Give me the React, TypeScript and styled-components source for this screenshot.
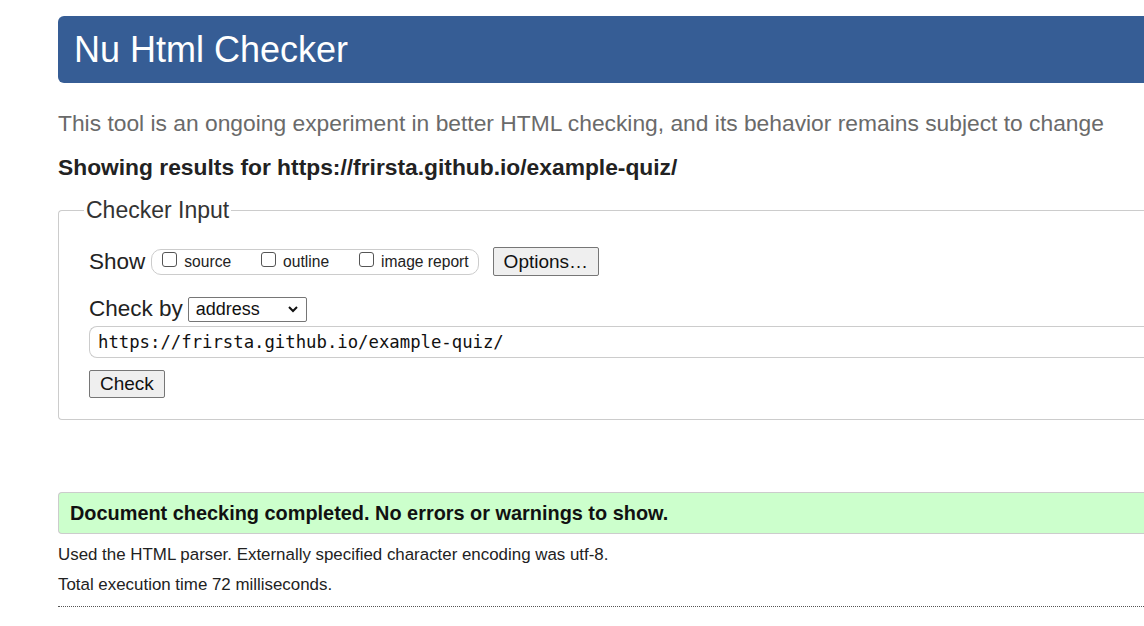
import React from "react";
import styled, { createGlobalStyle } from "styled-components";

const Global = createGlobalStyle`
  html, body { margin: 0; padding: 0; background: #fff; overflow: hidden; }
  body { font-family: "Liberation Sans", Arial, sans-serif; color: #222; }
`;

const Page = styled.div`
  width: 1200px;
  padding: 16px 0 0 58px;
`;

const Header = styled.h1`
  margin: 0;
  height: 67px;
  display: flex;
  align-items: center;
  padding: 0 16px;
  background: #365d95;
  color: #fff;
  font-weight: normal;
  font-size: 36px;
  border-radius: 6px 0 0 6px;
`;

const Tagline = styled.p`
  margin: 27px 0 0;
  font-size: 22.8px;
  color: #6a6a6a;
  line-height: 26px;
`;

const ResultsFor = styled.p`
  margin: 19px 0 0;
  font-size: 22.8px;
  font-weight: bold;
  color: #222;
  line-height: 24px;
`;

const Fieldset = styled.fieldset`
  margin: 18px 0 0;
  padding: 10px 0 21px 30px;
  border: 1px solid #ccc;
  border-radius: 4px 0 0 4px;
  border-right: none;
`;

const Legend = styled.legend`
  font-size: 23px;
  color: #333;
  padding: 0 2px;
  margin-left: -5px;
  line-height: 26px;
`;

const Row = styled.div<{ $top?: number; $gap?: number }>`
  display: flex;
  align-items: center;
  gap: ${(p) => p.$gap ?? 6}px;
  margin-top: ${(p) => p.$top ?? 0}px;
`;

const Label = styled.span`
  font-size: 22.5px;
  line-height: 26px;
  color: #222;
`;

const Group = styled.div`
  display: flex;
  align-items: center;
  height: 26px;
  box-sizing: border-box;
  border: 1px solid #ccc;
  border-radius: 10px;
  padding: 0 9px 0 10px;
  gap: 30px;
`;

const Opt = styled.label`
  display: flex;
  align-items: center;
  font-size: 15.6px;
  color: #222;
  gap: 7px;
`;

const Box = styled.span`
  width: 15px;
  height: 15px;
  border: 1px solid #555;
  border-radius: 3px;
  box-sizing: border-box;
  display: inline-block;
  margin-top: -4px;
`;

const Button = styled.button<{ $h?: number }>`
  font-family: "Liberation Sans", Arial, sans-serif;
  font-size: 19px;
  color: #111;
  background: #efefef;
  border: 1px solid #767676;
  border-radius: 2px;
  padding: 0 10px;
  height: ${(p) => p.$h ?? 29}px;
`;

const OptionsButton = styled(Button)`
  margin-left: 8px;
`;

const Select = styled.div`
  width: 119px;
  height: 25px;
  box-sizing: border-box;
  border: 1px solid #767676;
  border-radius: 2px;
  display: flex;
  align-items: center;
  justify-content: space-between;
  padding: 0 7px 0 7px;
  font-size: 18px;
  color: #111;
`;

const UrlInput = styled.div`
  margin-top: 4px;
  height: 32px;
  box-sizing: border-box;
  border: 1px solid #ccc;
  border-right: none;
  border-radius: 8px 0 0 8px;
  display: flex;
  align-items: center;
  padding-left: 8px;
  font-family: "DejaVu Sans Mono", "Liberation Mono", monospace;
  font-size: 17.3px;
  color: #111;
`;

const Success = styled.div`
  margin-top: 72px;
  height: 42px;
  box-sizing: border-box;
  background: #ccffcc;
  border: 1px solid #ccc;
  border-right: none;
  border-radius: 4px 0 0 4px;
  display: flex;
  align-items: center;
  padding-left: 11px;
  font-weight: bold;
  font-size: 19.9px;
  color: #111;
`;

const Note = styled.p<{ $top?: number }>`
  margin: ${(p) => p.$top ?? 0}px 0 0;
  font-size: 16.9px;
  color: #222;
  line-height: 20px;
`;

const Rule = styled.hr`
  margin: 11px 0 0;
  border: none;
  border-top: 1px dotted #555;
`;

const Chevron = () => (
  <svg width="12" height="8" viewBox="0 0 12 8">
    <path d="M2 2l4 4 4-4" fill="none" stroke="#111" strokeWidth="2" />
  </svg>
);

export default function App() {
  return (
    <Page>
      <Global />
      <Header>Nu Html Checker</Header>
      <Tagline>
        This tool is an ongoing experiment in better HTML checking, and its behavior remains subject to change
      </Tagline>
      <ResultsFor>Showing results for https://frirsta.github.io/example-quiz/</ResultsFor>
      <Fieldset>
        <Legend>Checker Input</Legend>
        <Row $top={14}>
          <Label>Show</Label>
          <Group>
            <Opt><Box />source</Opt>
            <Opt><Box />outline</Opt>
            <Opt><Box />image report</Opt>
          </Group>
          <OptionsButton>Options…</OptionsButton>
        </Row>
        <Row $top={20} $gap={5}>
          <Label>Check by</Label>
          <Select>
            <span>address</span>
            <Chevron />
          </Select>
        </Row>
        <UrlInput>https://frirsta.github.io/example-quiz/</UrlInput>
        <Row $top={12}>
          <Button $h={28}>Check</Button>
        </Row>
      </Fieldset>
      <Success>Document checking completed. No errors or warnings to show.</Success>
      <Note $top={11}>Used the HTML parser. Externally specified character encoding was utf-8.</Note>
      <Note $top={10}>Total execution time 72 milliseconds.</Note>
      <Rule />
    </Page>
  );
}
